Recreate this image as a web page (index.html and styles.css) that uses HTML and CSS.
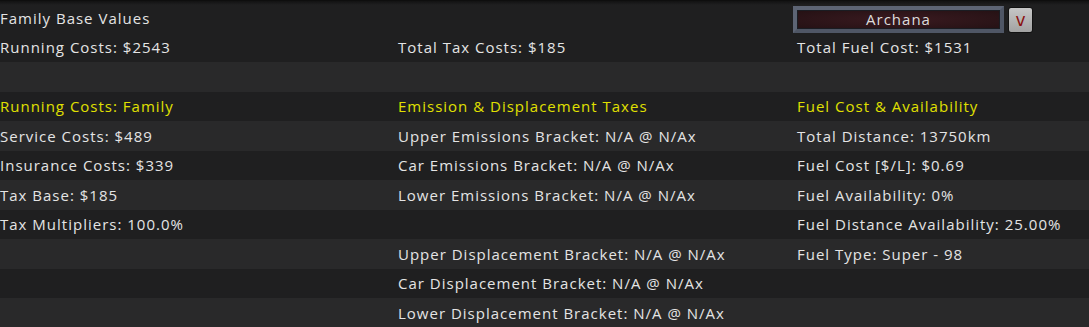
FILE: index.html
```html
<!DOCTYPE html>
<html>
<head>
	<title>Family Base Values</title>
	<link rel="stylesheet" href="styles.css">
</head>
<body>
	<div class="panel">
		<div class="row">
			<div class="cell">Family Base Values</div>
			<div class="cell"></div>
			<div class="cell pick">
				<div class="select">Archana</div>
				<button class="drop">v</button>
			</div>
		</div>
		<div class="row">
			<div class="cell">Running Costs: $2543</div>
			<div class="cell">Total Tax Costs: $185</div>
			<div class="cell">Total Fuel Cost: $1531</div>
		</div>
		<div class="row">
			<div class="cell"></div>
		</div>
		<!-- section titles -->
		<div class="row">
			<div class="cell head">Running Costs: Family</div>
			<div class="cell head">Emission &amp; Displacement Taxes</div>
			<div class="cell head">Fuel Cost &amp; Availability</div>
		</div>
		<div class="row">
			<div class="cell">Service Costs: $489</div>
			<div class="cell">Upper Emissions Bracket: N/A @ N/Ax</div>
			<div class="cell">Total Distance: 13750km</div>
		</div>
		<div class="row">
			<div class="cell">Insurance Costs: $339</div>
			<div class="cell">Car Emissions Bracket: N/A @ N/Ax</div>
			<div class="cell">Fuel Cost [$/L]: $0.69</div>
		</div>
		<div class="row">
			<div class="cell">Tax Base: $185</div>
			<div class="cell">Lower Emissions Bracket: N/A @ N/Ax</div>
			<div class="cell">Fuel Availability: 0%</div>
		</div>
		<div class="row">
			<div class="cell">Tax Multipliers: 100.0%</div>
			<div class="cell"></div>
			<div class="cell">Fuel Distance Availability: 25.00%</div>
		</div>
		<div class="row">
			<div class="cell"></div>
			<div class="cell">Upper Displacement Bracket: N/A @ N/Ax</div>
			<div class="cell">Fuel Type: Super - 98</div>
		</div>
		<div class="row">
			<div class="cell"></div>
			<div class="cell">Car Displacement Bracket: N/A @ N/Ax</div>
			<div class="cell"></div>
		</div>
		<div class="row">
			<div class="cell"></div>
			<div class="cell">Lower Displacement Bracket: N/A @ N/Ax</div>
			<div class="cell"></div>
		</div>
	</div>
</body>
</html>
```

FILE: styles.css
```css
* {
    box-sizing: border-box;
}

html, body {
    margin: 0;
    padding: 0;
}

body {
    background: #222223;
    font-family: "Open Sans", sans-serif;
    font-size: 15px;
    letter-spacing: 1px;
    color: #e4e4e4;
    overflow: hidden;
}

.panel {
    padding-top: 2px;
    border-top: 1px solid #0e0e0e;
    background: linear-gradient(#121212, #1f1f20 4px);
}

.row {
    display: grid;
    grid-template-columns: 398px 399px 1fr;
    height: 29.5px;
    align-items: center;
}

.row:nth-child(odd) {
    background: #29292a;
}
.row:nth-child(even) {
    background: #1f1f20;
}
.row:first-child {
    background: transparent;
}

.cell {
    white-space: nowrap;
}

.head {
    color: #e0e000;
}

/* dropdown */
.pick {
    display: flex;
    align-items: center;
    margin-left: -4px;
    margin-top: 3px;
    gap: 4px;
}

.select {
    width: 211px;
    height: 27px;
    line-height: 19px;
    text-align: center;
    background: radial-gradient(ellipse at center, #3a1a20, #241114);
    border: 4px solid #4f5665;
    border-top-color: #5d6474;
    border-left-color: #5d6474;
    box-shadow: inset 0 0 0 1px #1a1c22;
    color: #dcdcdc;
}

.drop {
    width: 25px;
    height: 26px;
    padding: 0;
    border: 1px solid #111;
    border-radius: 3px;
    background: linear-gradient(#c6c6c6, #a2a2a2);
    color: #8a1010;
    font-family: "DejaVu Sans", sans-serif;
    font-size: 17px;
    line-height: 20px;
    letter-spacing: 0;
}
```
